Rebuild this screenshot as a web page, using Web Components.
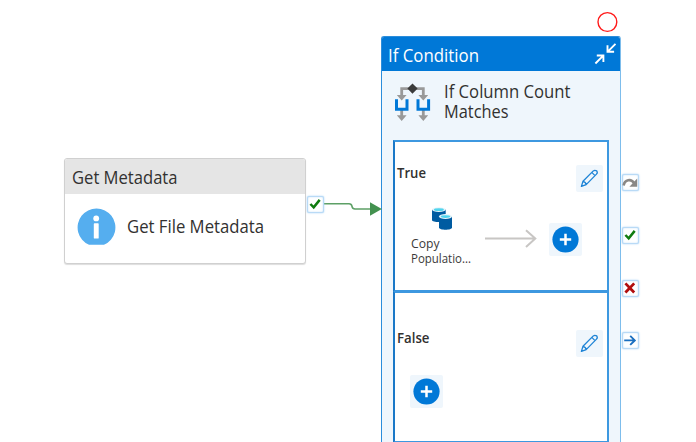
<!DOCTYPE html>
<html lang="en">
<head>
<meta charset="utf-8">
<title>Pipeline</title>
<style>
html,body{margin:0;height:100%;overflow:hidden;background:#fff}
body{font-family:"Open Sans","Noto Sans",sans-serif;color:#323130}
</style>
</head>
<body>
<pipeline-canvas></pipeline-canvas>
<script>
const define = (name, html) => customElements.define(name, class extends HTMLElement {
  constructor() {
    super();
    this.attachShadow({ mode: 'open' });
  }
  connectedCallback() {
    const t = document.createElement('template');
    t.innerHTML = typeof html === 'function' ? html(this) : html;
    this.shadowRoot.replaceChildren(t.content.cloneNode(true));
  }
});

/* Single line of text, fitted to the given width, with its baseline at "base". */
define('fit-text', el => {
  const s = +el.getAttribute('size'), w = +el.getAttribute('w'), h = +el.getAttribute('h');
  return `<style>:host{display:block;width:${w}px;height:${h}px}svg{display:block;overflow:visible}
  text{font-size:${s}px;fill:currentColor;font-weight:${el.getAttribute('weight') || 400}}</style>
  <svg width="${w}" height="${h}"><text x="0" y="${el.getAttribute('base')}" textLength="${w}" lengthAdjust="spacingAndGlyphs">${el.textContent}</text></svg>`;
});

const glyphs = {
  check: '<path d="M3.4 8 6.7 11.4 12.7 3.9" fill="none" stroke="#107c10" stroke-width="2.5"/>',
  cross: '<path d="M3.4 3.4 12.2 12.5M12.2 3.4 3.4 12.5" fill="none" stroke="#b10e0e" stroke-width="2.8"/>',
  next: '<path d="M2.2 8.4H12.6M8.2 3.9 12.8 8.4 8.2 12.9" fill="none" stroke="#1a6fc0" stroke-width="1.9"/>',
  skip: '<path d="M1.6 11.4C2.8 5.4 9.1 4.4 12 9" fill="none" stroke="#8a8886" stroke-width="2.7"/><path d="M15.2 4.6V12.8H7.4Z" fill="#8a8886"/>'
};
define('status-badge', el => `<style>:host{display:block;width:17px;height:17px}
  svg{display:block;background:#fff;border-radius:2px;box-shadow:inset 0 0 0 1px #b9daf6,inset 0 0 2px 1px #c4e0f8,0 0 2px #a9d2f6}</style>
  <svg width="17" height="17" viewBox="0 0 17 17">${glyphs[el.getAttribute('kind')]}</svg>`);

define('edit-button', `<style>:host{display:block;width:27px;height:27px;background:#eff6fc;border-radius:2px}svg{display:block}</style>
  <svg width="27" height="27" viewBox="0 0 27 27" fill="none" stroke="#1f84d6" stroke-width="1.3" stroke-linejoin="round">
  <path d="M5.4 21.4 7 16.3 17.3 5.9Q18.8 4.7 20.7 5.9 22 7.8 20.5 9.1L10.2 19.6ZM15.8 7.4 19 10.6M7 16.3Q9.7 16.8 10.2 19.6"/></svg>`);

define('add-button', `<style>:host{display:block;width:33px;height:33px;background:#eff6fc;border-radius:2px}svg{display:block}</style>
  <svg width="33" height="33"><circle cx="16.5" cy="16.5" r="13.1" fill="#0078d7"/><path d="M10.8 16.5H22.2M16.5 10.8V22.2" stroke="#fff" stroke-width="2.5"/></svg>`);

define('copy-activity', `<style>:host{display:block;width:60px}svg{display:block;margin-left:21px}
  text{font-size:12.6px;fill:#3b3a39}svg.name{margin:0;overflow:visible}</style>
  <svg width="21" height="24" viewBox="0 0 21 24">
  <path d="M0 2.5V13C0 15.8 13.7 15.8 13.7 13V2.5Z" fill="#005ba1"/><ellipse cx="6.85" cy="2.6" rx="6.85" ry="2.3" fill="#e6f4fa"/><ellipse cx="6.85" cy="2.7" rx="5" ry="1.4" fill="#50d5ee"/>
  <path d="M7 9.5V20.5C7 23.5 20 23.5 20 20.5V9.5Z" fill="#005ba1"/><ellipse cx="13.5" cy="9.5" rx="6.5" ry="2.4" fill="#e6f4fa"/><ellipse cx="13.5" cy="9.6" rx="4.8" ry="1.4" fill="#50d5ee"/></svg>
  <svg class="name" width="60" height="30"><text><tspan x="0" y="17" textLength="28.5" lengthAdjust="spacingAndGlyphs">Copy</tspan><tspan x="0" y="32" textLength="60" lengthAdjust="spacingAndGlyphs">Populatio...</tspan></text></svg>`);

define('branch-panel', `<style>:host{display:block;box-sizing:border-box;height:152px;border:2px solid #3d98e0;border-left-color:#1a78c8;background:#fff;padding:23px 4px 0 2px}
  .top{display:flex;justify-content:space-between;align-items:flex-start}</style>
  <div class="top"><slot name="label"></slot><edit-button></edit-button></div><slot></slot>`);

define('metadata-node', `<style>:host{display:block;box-sizing:border-box;width:242px;height:106px;border:1px solid #d0d0d0;border-radius:3px;background:#fff;box-shadow:0 1px 1px #ddd;overflow:hidden}
  header{height:34.5px;background:#e5e5e5;padding-left:6.5px;box-sizing:border-box}
  main{display:flex;gap:11.5px;padding:14px 0 0 11.5px}svg{display:block}</style>
  <header><fit-text size="17.8" w="105.5" h="34" base="24.6">Get Metadata</fit-text></header>
  <main><svg width="39" height="38" viewBox="0 0 39 38"><path d="M12 36.8A18.9 18.9 0 1 1 27 36.8Z" fill="#55aeef"/><circle cx="19.2" cy="10.4" r="2.9" fill="#fff"/><rect x="16.8" y="15.2" width="4.9" height="15.4" rx=".7" fill="#fff"/></svg>
  <fit-text size="17.8" w="137" h="38" base="24.6">Get File Metadata</fit-text></main>`);

define('condition-node', `<style>:host{display:block;box-sizing:border-box;width:240px;height:420px;border:1px solid #2b8ddb;border-right-color:#7dbdec;border-radius:3px 3px 0 0;background:#eff6fc;overflow:hidden}
  header{display:flex;justify-content:space-between;height:34px;background:#0078d7;color:#fff;padding:0 3px 0 5.5px}
  .title{display:flex;gap:12px;height:69px;padding:12px 0 0 12px;box-sizing:border-box}
  .title .name{overflow:visible}
  .title text{font-size:17.6px;fill:currentColor}
  .panels{margin:0 11px 0 11px}
  .panels branch-panel + branch-panel{margin-top:-1px}
  svg{display:block}
  .flow{display:flex;padding:15px 0 0 13.6px;align-items:flex-start}
  .flow svg{margin:22px 0 0 14px}.flow add-button{margin:16px 0 0 12px}
  .false{padding-top:36.5px}
  .only{padding:18px 0 0 13px}</style>
  <header><fit-text size="17.8" w="91" h="34" base="24.6">If Condition</fit-text>
  <svg width="24" height="34" fill="none" stroke="#fff" stroke-width="1.9"><path d="M22.5 6.8 15 14.3M14.5 8.2V14.8H21.1M2.4 26.5 10 18.9M3.8 18.5H10.4V25"/></svg></header>
  <div class="title"><svg width="38" height="40" viewBox="394 83 38 40"><path d="M401.7 96V88.7H423.3V96M401.7 110V116M423.3 110V116" fill="none" stroke="#999" stroke-width="2.8"/>
  <path d="M396.8 95H406.6L401.7 100.5ZM418.4 95H428.2L423.3 100.5ZM396.8 115.2H406.6L401.7 121ZM418.4 115.2H428.2L423.3 121Z" fill="#999"/>
  <path d="M396.5 99.2V109.3H407V99.2M418 99.2V109.3H428.6V99.2" fill="none" stroke="#0078d7" stroke-width="3"/><path d="M412.5 83.5 417.6 88.6 412.5 93.7 407.4 88.6Z" fill="#3b3b3b"/></svg>
  <svg class="name" width="128" height="40"><text><tspan x="0" y="14.7" textLength="126.5" lengthAdjust="spacingAndGlyphs">If Column Count</tspan><tspan x="0" y="34.8" textLength="64.5" lengthAdjust="spacingAndGlyphs">Matches</tspan></text></svg></div>
  <div class="panels">
  <branch-panel><fit-text slot="label" size="14.5" weight="600" w="29" h="20" base="13.4">True</fit-text>
   <div class="flow"><copy-activity></copy-activity><svg width="52" height="20" fill="none" stroke="#c8c6c4" stroke-width="2"><path d="M0 9.5H50M41 1.2 50.3 9.5 41 18"/></svg><add-button></add-button></div></branch-panel>
  <branch-panel class="false"><fit-text slot="label" size="14.5" weight="600" w="32.5" h="20" base="13.4">False</fit-text>
   <div class="only"><add-button></add-button></div></branch-panel>
  </div>`);

/* Free canvas: nodes, connector and status badges are pinned at their own coordinates. */
define('pipeline-canvas', `<style>:host{display:block;position:relative;width:696px;height:442px;overflow:hidden;background:#fff}
  metadata-node{position:absolute;left:64px;top:158px}condition-node{position:absolute;left:381px;top:36px}
  status-badge{position:absolute;left:621.5px}svg{position:absolute;left:0;top:0}</style>
  <metadata-node></metadata-node>
  <condition-node></condition-node>
  <svg width="696" height="442"><circle cx="607.4" cy="22" r="9.4" fill="none" stroke="#ff1a1a" stroke-width="1.4"/>
  <path d="M323 203.7H349Q351.5 203.7 352 206.3T355 209H371" fill="none" stroke="#5da066" stroke-width="1.6"/><path d="M370 202.3 381.8 209 370 215.8Z" fill="#43914f"/></svg>
  <status-badge kind="check" style="left:306.5px;top:195.5px"></status-badge>
  <status-badge kind="skip" style="top:174px"></status-badge>
  <status-badge kind="check" style="top:227px"></status-badge>
  <status-badge kind="cross" style="top:279.5px"></status-badge>
  <status-badge kind="next" style="top:332px"></status-badge>`);
</script>
</body>
</html>
